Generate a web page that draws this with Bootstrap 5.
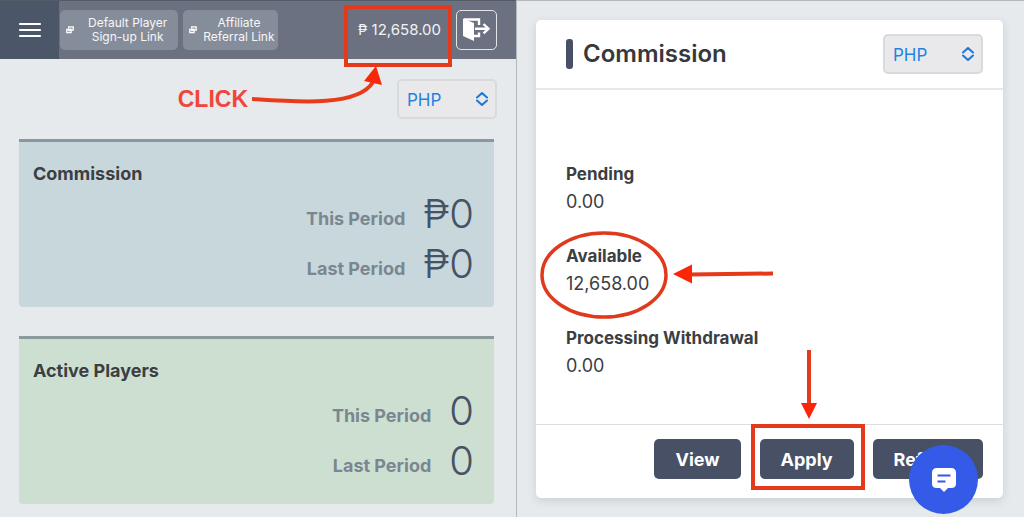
<!DOCTYPE html>
<html lang="en">
<head>
<meta charset="utf-8">
<meta name="viewport" content="width=device-width, initial-scale=1">
<title>Affiliate commission</title>
<link href="https://cdn.jsdelivr.net/npm/bootstrap@5.3.0/dist/css/bootstrap.min.css" rel="stylesheet">
<style>
:root { --slate: #475064; --mark-red: #e5391c; --page: #e6eaed; }
body { font-family: Inter, "Noto Sans", sans-serif; background: var(--page); color: #3b3e42; }
.screens { display: grid; grid-template-columns: 517fr 507fr; min-height: 100vh; }
.screen-left { border-right: 1px solid #b4b9be; }
.screen-right { border-top: 1px solid #b4b7bb; padding: 19px 21px 18px 19px; }
.topbar { height: 59px; background: #6b7181; border-top: 1px solid #555b66; padding-right: 19px; }
.menu-btn { width: 59px; background: #4b5669; border: 0; border-radius: 0; }
.quick-links { gap: 5px; margin-left: 1px; }
.link-btn { background: #868d9a; color: #f6f7f9; font-size: 12px; line-height: 14px; height: 40px; border: 0; border-radius: 5px; padding: 0 3px 0 6px; }
.link-btn:hover { background: #7b8290; color: #fff; }
.link-btn .wide-label { padding: 0 8px 0 14px; }
.link-btn .tight-label { padding-left: 6px; }
.balance { color: #f1f2f4; font-size: 15px; margin-right: 15px; }
.balance .sign { font-size: 14px; }
.mark-box::after { content: ""; position: absolute; border: 4px solid var(--mark-red); pointer-events: none; }
.balance.mark-box::after { inset: -14px -11px -26px -14px; }
.exit-btn { width: 41px; height: 40px; border: 1px solid #e3e5e9; border-radius: 5px; }
.tools { padding: 20px 19px 0 0; }
.click-note { color: #f2453a; font: bold 23px/40px "Liberation Sans", sans-serif; margin-right: 149px; }
.curve { left: 100%; top: -14px; margin-left: 4px; }
.currency { appearance: none; width: 100px; height: 40px; padding: 3px 8px 0; font-size: 17px; color: #2383de; border: 2px solid #d9dadc; border-radius: 5px;
  background: #e9e9eb url("data:image/svg+xml,%3Csvg xmlns='http://www.w3.org/2000/svg' viewBox='0 0 12 14' fill='none' stroke='%231c79d4' stroke-width='2' stroke-linejoin='round' stroke-linecap='round'%3E%3Cpath d='M1 5.500l5-4.500 5 4.500M1 8.500l5 4.500 5-4.500'/%3E%3C/svg%3E") no-repeat right 7px center / 12px 14px; }
.stats { padding: 20px 22px 12px 19px; gap: 29px; }
.stat { border-top: 3px solid #8a96a0; border-radius: 0 0 4px 4px; padding: 18px 20px 18px 14px; }
.stat-blue { background: #c8d7db; }
.stat-green { background: #ccdfd1; border-color: #8b9b9c; }
.stat h2 { font-size: 18px; line-height: 27px; font-weight: 700; margin: 0 0 2px; }
.stat-row { height: 50px; gap: 18px; }
.stat-row dt { font-size: 18px; font-weight: 700; color: #7a8691; padding-top: 9px; }
.stat-row dd { font-size: 40px; font-weight: 300; color: #475364; line-height: 50px; margin: 0; }
.panel { border: 0; border-radius: 5px; box-shadow: 0 3px 8px rgba(60,75,95,.16); color: inherit; }
.panel-head { height: 70px; border-bottom: 2px solid #e7e8ea; padding: 0 20px 0 30px; }
.title-bar { width: 7px; height: 30px; border-radius: 3px; background: var(--slate); margin-right: 10px; }
.panel-head h1 { font-size: 24px; font-weight: 600; margin: 0; color: #37383b; }
.panel-body { padding: 71px 30px 45px; }
.amounts { gap: 28px; margin: 0; }
.amounts dt, .amounts dd { font-size: 17px; line-height: 27px; margin: 0; }
.amounts dt { font-weight: 700; }
.amounts dd { font-size: 18px; }
.ring { left: -26px; top: -12px; }
.pointer { left: 106px; top: 19px; }
.panel-foot { border-top: 1px solid #dcdee1; padding: 14px 20px 19px; gap: 19px; }
.act-btn { height: 40px; padding: 0 21px; font-size: 18px; font-weight: 700; color: #fff; background: var(--slate); border: 0; border-radius: 5px; }
.act-btn:hover { color: #fff; background: #3b4456; }
.wrap-apply.mark-box::after { inset: -15px -11px -11px -9px; }
.down-arrow { left: 40px; top: -90px; }
.chat-btn { right: 46px; bottom: 3px; width: 69px; height: 69px; background: #345be8; border: 0; z-index: 5; }
</style>
</head>
<body>
<div class="screens">
  <section class="screen-left">
    <header class="topbar d-flex align-items-center">
      <button class="btn menu-btn align-self-stretch p-0" aria-label="Menu">
        <svg width="24" height="20" viewBox="0 0 24 20" stroke="#fff" stroke-width="2.200" stroke-linecap="round"><path d="M2 2h20M2 8h20M2 14h20"/></svg>
      </button>
      <nav class="quick-links d-flex me-auto">
        <button class="btn link-btn d-flex align-items-center">
          <svg width="8" height="8" viewBox="0 0 8 8" fill="none" stroke="#fff" stroke-width="1.300"><path d="M2.700 2.500V.8h4.500v3.400H5.600M.8 3.500h4.300v3.200H.8zM2.500 5.200L5 2.800"/></svg>
          <span class="wide-label">Default Player<br>Sign-up Link</span>
        </button>
        <button class="btn link-btn d-flex align-items-center">
          <svg width="8" height="8" viewBox="0 0 8 8" fill="none" stroke="#fff" stroke-width="1.300"><path d="M2.700 2.500V.8h4.500v3.400H5.600M.8 3.500h4.300v3.200H.8zM2.500 5.200L5 2.800"/></svg>
          <span class="tight-label">Affiliate<br>Referral Link</span>
        </button>
      </nav>
      <span class="balance mark-box position-relative"><span class="sign">₱</span> 12,658.00</span>
      <button class="btn exit-btn p-0 d-flex align-items-center justify-content-center" aria-label="Log out">
        <svg width="29" height="28" viewBox="0 0 29 28"><path d="M2 3.500h15v5.500M17 16.500V20h-5" fill="none" stroke="#fff" stroke-width="2.400"/><path d="M1 2.500l11 4.500v18L1 20z" fill="#fff"/><path d="M13 12.700h13M21.500 8l5 4.700-5 4.700" fill="none" stroke="#fff" stroke-width="2.400"/></svg>
      </button>
    </header>
    <div class="tools d-flex justify-content-end">
      <div class="click-note position-relative">CLICK
        <svg class="curve position-absolute" width="135" height="50" viewBox="0 0 135 50"><path d="M0 34C45 37 106 42 121 17" fill="none" stroke="#e93a1a" stroke-width="4"/><path d="M124 1l6 19-18-4z" fill="#f8280a"/></svg>
      </div>
      <select class="currency" aria-label="Currency"><option>PHP</option></select>
    </div>
    <div class="stats d-flex flex-column">
      <section class="stat stat-blue">
        <h2>Commission</h2>
        <dl class="mb-0">
          <div class="stat-row d-flex justify-content-end align-items-center"><dt>This Period</dt><dd>₱0</dd></div>
          <div class="stat-row d-flex justify-content-end align-items-center"><dt>Last Period</dt><dd>₱0</dd></div>
        </dl>
      </section>
      <section class="stat stat-green">
        <h2>Active Players</h2>
        <dl class="mb-0">
          <div class="stat-row d-flex justify-content-end align-items-center"><dt>This Period</dt><dd>0</dd></div>
          <div class="stat-row d-flex justify-content-end align-items-center"><dt>Last Period</dt><dd>0</dd></div>
        </dl>
      </section>
    </div>
  </section>

  <section class="screen-right">
    <div class="card panel">
      <div class="panel-head d-flex align-items-center">
        <span class="title-bar"></span>
        <h1 class="me-auto">Commission</h1>
        <select class="currency" aria-label="Commission currency"><option>PHP</option></select>
      </div>
      <div class="panel-body">
        <dl class="amounts d-flex flex-column">
          <div><dt>Pending</dt><dd>0.00</dd></div>
          <div class="position-relative"><dt>Available</dt><dd>12,658.00</dd>
            <svg class="ring position-absolute" width="128" height="88" viewBox="0 0 128 88"><ellipse cx="64" cy="44" rx="62" ry="42" fill="none" stroke="#df3a1e" stroke-width="3.500"/></svg>
            <svg class="pointer position-absolute" width="102" height="24" viewBox="0 0 102 24"><path d="M18 12.500L101 11.500" stroke="#e5391c" stroke-width="4"/><path d="M1 12L20 2.500v19z" fill="#fb2508"/></svg>
          </div>
          <div><dt>Processing Withdrawal</dt><dd>0.00</dd></div>
        </dl>
      </div>
      <div class="panel-foot d-flex justify-content-end">
        <button class="btn act-btn">View</button>
        <div class="wrap-apply mark-box position-relative">
          <button class="btn act-btn">Apply</button>
          <svg class="down-arrow position-absolute" width="18" height="72" viewBox="0 0 18 72"><path d="M9 1V56" stroke="#e5391c" stroke-width="4"/><path d="M1 54h16L9 70z" fill="#fb2508"/></svg>
        </div>
        <button class="btn act-btn">Refresh</button>
      </div>
    </div>
  </section>
</div>
<button class="chat-btn position-fixed rounded-circle p-0 d-flex align-items-center justify-content-center" aria-label="Chat">
  <svg width="24" height="24" viewBox="0 0 24 24"><path d="M5 0h14q5 0 5 5v11q0 4-5 4h-3l-4 4-4-4H5q-5 0-5-4V5q0-5 5-5z" fill="#fff"/><path d="M5.500 7.500h13M5.500 13.500h8" stroke="#345be8" stroke-width="2.200"/></svg>
</button>
<script src="https://cdn.jsdelivr.net/npm/bootstrap@5.3.0/dist/js/bootstrap.bundle.min.js"></script>
</body>
</html>
